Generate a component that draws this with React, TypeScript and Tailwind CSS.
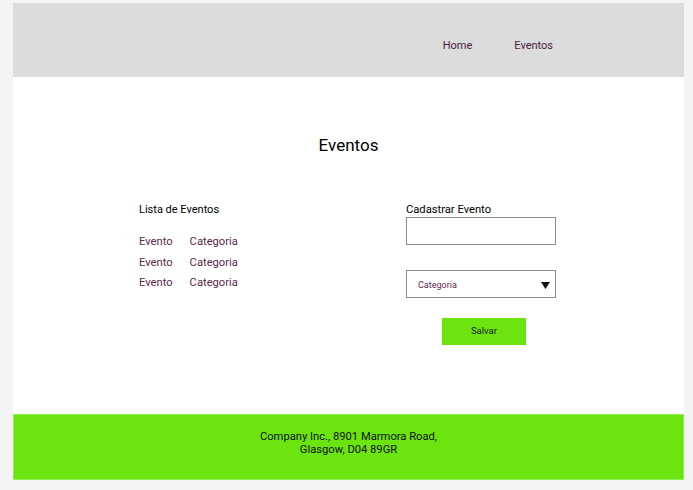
const rows = ["Evento", "Evento", "Evento"];

export default function App() {
  return (
    <div
      className="min-h-[490px] w-full bg-[#f4f4f4] pt-[3px] pl-[13px] pr-[9px]"
      style={{ fontFamily: "Roboto, 'Liberation Sans', sans-serif" }}
    >
      <div className="w-[671px]">
        {/* Header */}
        <header className="flex h-[74px] items-center justify-end bg-[#dcdcdc] pr-[131px] pt-[13px]">
          <nav className="flex gap-[42px] text-[11px] text-[#4a1d3f]">
            <a>Home</a>
            <a>Eventos</a>
          </nav>
        </header>

        {/* Body */}
        <main className="h-[337px] bg-white pt-[57px]">
          <h1 className="text-center text-[17px] leading-[22px] text-black">Eventos</h1>

          <div className="mt-[47px] flex justify-between pl-[126px] pr-[128px]">
            <div>
              <h2 className="text-[11px] leading-[14px] text-black">Lista de Eventos</h2>
              <ul className="mt-[15px] text-[11.2px] leading-[20.5px] text-[#5a2a4d]">
                {rows.map((r, i) => (
                  <li key={i} className="flex gap-[17px]">
                    <span>{r}</span>
                    <span>Categoria</span>
                  </li>
                ))}
              </ul>
            </div>

            <div className="flex w-[150px] flex-col">
              <label className="text-[11.2px] leading-[14px] text-black">Cadastrar Evento</label>
              <input className="h-[28px] w-[150px] border border-[#8c8c8c] bg-white outline-none" />
              <div className="mt-[25px] flex h-[28px] w-[150px] items-center justify-between border border-[#8c8c8c] pl-[11px] pr-[5px] pt-[3px]">
                <span className="text-[9px] text-[#5a2a4d]">Categoria</span>
                <svg width="9" height="7" viewBox="0 0 9 7">
                  <polygon points="0,0 9,0 4.5,7" fill="#111" />
                </svg>
              </div>
              <button className="ml-[36px] mt-[20px] h-[27px] w-[84px] bg-[#6ce40f] text-[9.5px] text-[#1a1a1a]">
                Salvar
              </button>
            </div>
          </div>
        </main>

        {/* Footer */}
        <footer className="flex h-[66px] flex-col items-center border border-[#8fee55] bg-[#6ce40f] pt-[15px] text-[11.2px] leading-[13px] text-[#111]">
          <p>Company Inc., 8901 Marmora Road,</p>
          <p>Glasgow, D04 89GR</p>
        </footer>
      </div>
    </div>
  );
}
